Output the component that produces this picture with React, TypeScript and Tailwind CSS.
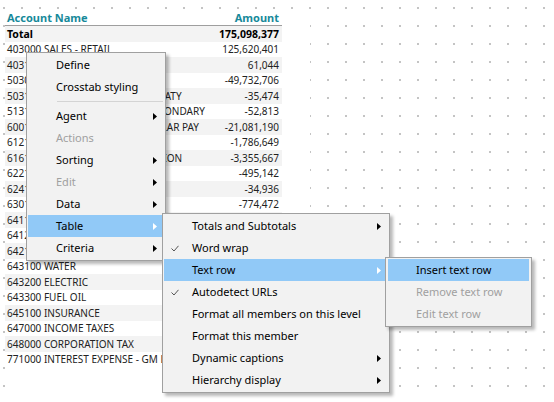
import React from 'react';

type Row = { name: string; amount: string };

const rows: Row[] = [
  { name: '403000 SALES - RETAIL', amount: '125,620,401' },
  { name: '403100 SALES - WHOLESALE', amount: '61,044' },
  { name: '503000 COST OF SALES', amount: '-49,732,706' },
  { name: '503100 COST OF SALES - TAX PRIVATY', amount: '-35,474' },
  { name: '513100 PURCHASES - GOODS SECONDARY', amount: '-52,813' },
  { name: '600100 SALARIES, WAGES - REGULAR PAY', amount: '-21,081,190' },
  { name: '612100 PAYROLL TAXES', amount: '-1,786,649' },
  { name: '616100 EMPLOYEE BENEFIT PENSION', amount: '-3,355,667' },
  { name: '622100 RENT', amount: '-495,142' },
  { name: '624100 REPAIRS', amount: '-34,936' },
  { name: '630100 DEPRECIATION', amount: '-774,472' },
  { name: '641100 TELEPHONE', amount: '-12,380' },
  { name: '641200 INTERNET', amount: '-8,915' },
  { name: '642100 GAS', amount: '-41,207' },
  { name: '643100 WATER', amount: '-9,488' },
  { name: '643200 ELECTRIC', amount: '-66,512' },
  { name: '643300 FUEL OIL', amount: '-17,903' },
  { name: '645100 INSURANCE', amount: '-402,118' },
  { name: '647000 INCOME TAXES', amount: '-8,640,221' },
  { name: '648000 CORPORATION TAX', amount: '-2,310,554' },
  { name: '771000 INTEREST EXPENSE - GM LOAN', amount: '-1,204,877' },
];

type Item =
  | { sep: true }
  | { sep?: false; label: string; sub?: boolean; disabled?: boolean; active?: boolean; checked?: boolean };

const mainMenu: Item[] = [
  { label: 'Define' },
  { label: 'Crosstab styling' },
  { sep: true },
  { label: 'Agent', sub: true },
  { label: 'Actions', disabled: true },
  { label: 'Sorting', sub: true },
  { label: 'Edit', sub: true, disabled: true },
  { label: 'Data', sub: true },
  { label: 'Table', sub: true, active: true },
  { label: 'Criteria', sub: true },
];

const tableMenu: Item[] = [
  { label: 'Totals and Subtotals', sub: true },
  { label: 'Word wrap', checked: true },
  { label: 'Text row', sub: true, active: true },
  { label: 'Autodetect URLs', checked: true },
  { label: 'Format all members on this level' },
  { label: 'Format this member' },
  { label: 'Dynamic captions', sub: true },
  { label: 'Hierarchy display', sub: true },
];

const textRowMenu: Item[] = [
  { label: 'Insert text row', active: true },
  { label: 'Remove text row', disabled: true },
  { label: 'Edit text row', disabled: true },
];

const Arrow: React.FC<{ white?: boolean }> = ({ white }) => (
  <svg width="4" height="7" viewBox="0 0 4 7" className="absolute right-[7px] top-[8px]">
    <polygon points="0,0 4,3.5 0,7" fill={white ? '#ffffff' : '#000000'} />
  </svg>
);

const Check: React.FC = () => (
  <svg width="8" height="7" viewBox="0 0 8 7" className="absolute left-[7px] top-[8px]">
    <path d="M0.5 3.5 L3 6 L7.5 0.8" fill="none" stroke="#555555" strokeWidth="1" />
  </svg>
);

const MenuList: React.FC<{ items: Item[] }> = ({ items }) => (
  <>
    {items.map((it, i) =>
      it.sep ? (
        <div key={i} className="h-[7px] flex items-center">
          <div className="h-px flex-1 ml-[29px] mr-px bg-[#d4d4d4]" />
        </div>
      ) : (
        <div
          key={i}
          className={`relative h-[22px] flex items-center pl-[28px] whitespace-nowrap ${
            it.active ? 'bg-[#91c9f7]' : ''
          } ${it.disabled ? 'text-[#a0a0a0]' : 'text-black'}`}
        >
          {it.checked && <Check />}
          {it.label}
          {it.sub && <Arrow white={it.active} />}
        </div>
      )
    )}
  </>
);

const menuBox =
  'absolute border border-[#a0a0a0] bg-[#f2f2f2] shadow-[3px_3px_3px_rgba(0,0,0,0.28)] text-[11px]';

const DotGrid: React.FC = () => (
  <svg className="absolute inset-0" width="554" height="402">
    <defs>
      <pattern id="dots" x="0" y="0" width="18" height="18" patternUnits="userSpaceOnUse">
        <rect x="3" y="7" width="2" height="2" fill="#c4c4c4" />
      </pattern>
    </defs>
    <rect width="554" height="402" fill="url(#dots)" />
  </svg>
);

export default function App() {
  return (
    <div className="relative w-[554px] h-[402px] overflow-hidden bg-white font-['Segoe_UI','Noto_Sans',sans-serif]">
      <DotGrid />

      <div className="relative ml-[5px] mt-[10px] w-[305px] h-[392px] bg-white">
        <div className="w-[277px] text-[10px]">
          <div className="h-[16px] flex items-center justify-between px-[2px] pr-[3px] border-b border-[#9e9e9e] text-[11px] font-bold text-[#17899a] leading-none">
            <span>Account Name</span>
            <span>Amount</span>
          </div>
          <div className="h-[15.5px] flex items-center justify-between px-[2px] pr-[3px] bg-[#f3f3f3] text-[10.5px] font-bold text-black leading-none">
            <span>Total</span>
            <span>175,098,377</span>
          </div>
          {rows.map((r, i) => (
            <div
              key={r.name}
              className={`h-[15.5px] flex items-center justify-between px-[2px] pr-[3px] text-[#222] leading-none ${
                i % 2 === 1 ? 'bg-[#f3f3f3]' : 'bg-white'
              }`}
            >
              <span className="whitespace-nowrap">{r.name}</span>
              <span>{r.amount}</span>
            </div>
          ))}
        </div>
      </div>

      <div className={`${menuBox} left-[26px] top-[52px] w-[140px] h-[209px] p-px`}>
        <MenuList items={mainMenu} />
      </div>

      <div className={`${menuBox} left-[162px] top-[213px] w-[228px] h-[180px] p-px`}>
        <MenuList items={tableMenu} />
      </div>

      <div className={`${menuBox} left-[385px] top-[257px] w-[147px] h-[70px] px-[2px] py-px`}>
        <MenuList items={textRowMenu} />
      </div>
    </div>
  );
}
